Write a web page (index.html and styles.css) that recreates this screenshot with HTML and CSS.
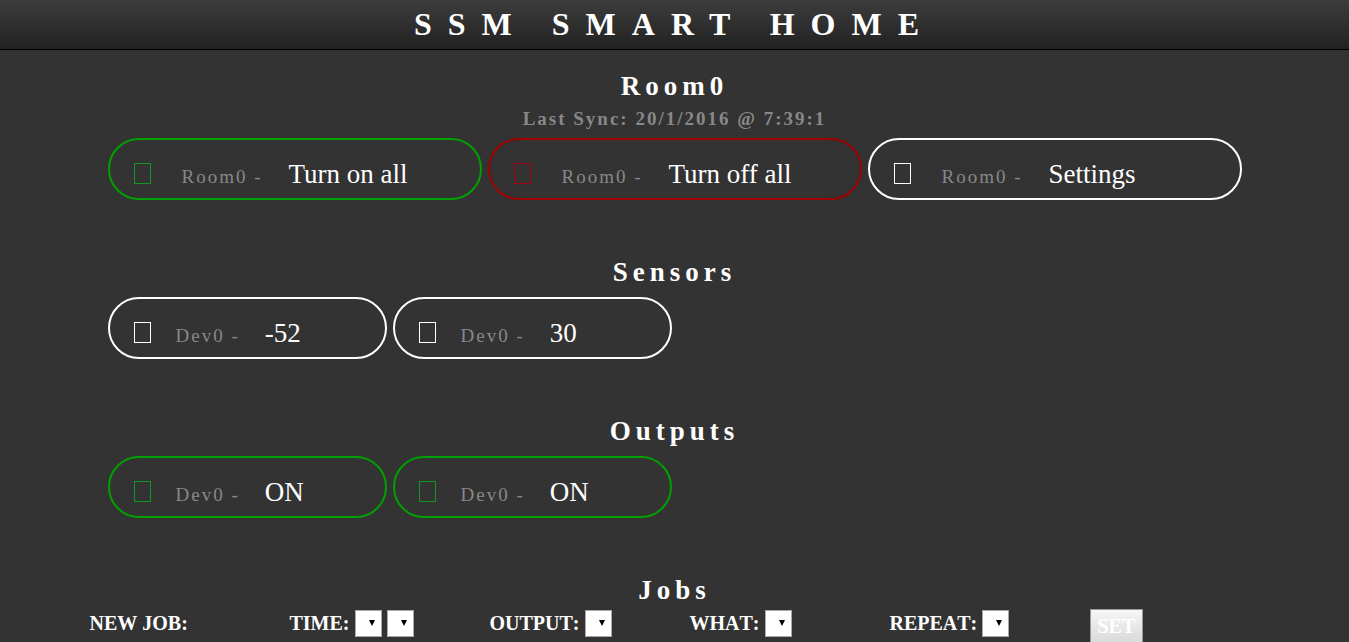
FILE: index.html
```html
<!DOCTYPE html>
<html lang="en">
<head>
<meta charset="utf-8">
<title>SSM Smart Home</title>
<link rel="stylesheet" href="styles.css">
</head>
<body>
<header class="topbar"><h1 class="title">SSM SMART HOME</h1></header>
<main>
  <section class="section">
    <h2 class="heading">Room0</h2>
    <h3 class="sync">Last Sync: 20/1/2016 @ 7:39:1</h3>
    <div class="grid actions">
      <button type="button" class="pill green"><span class="icon"></span><span class="label">Room0 -</span><span class="value">Turn on all</span></button>
      <button type="button" class="pill red"><span class="icon"></span><span class="label">Room0 -</span><span class="value">Turn off all</span></button>
      <button type="button" class="pill"><span class="icon"></span><span class="label">Room0 -</span><span class="value">Settings</span></button>
    </div>
  </section>
  <section class="section">
    <h2 class="heading">Sensors</h2>
    <div class="grid devices">
      <div class="pill"><span class="icon"></span><span class="label">Dev0 -</span><span class="value">-52</span></div>
      <div class="pill"><span class="icon"></span><span class="label">Dev0 -</span><span class="value">30</span></div>
    </div>
  </section>
  <section class="section">
    <h2 class="heading">Outputs</h2>
    <div class="grid devices">
      <button type="button" class="pill green"><span class="icon"></span><span class="label">Dev0 -</span><span class="value">ON</span></button>
      <button type="button" class="pill green"><span class="icon"></span><span class="label">Dev0 -</span><span class="value">ON</span></button>
    </div>
  </section>
  <section class="section">
    <h2 class="heading">Jobs</h2>
    <form class="jobs">
      <div class="field">NEW JOB:</div>
      <div class="field">
        <label for="hour">TIME:</label>
        <span class="drop"><select id="hour"></select></span>
        <span class="drop"><select id="minute" aria-label="Minute"></select></span>
      </div>
      <div class="field"><label for="output">OUTPUT:</label><span class="drop"><select id="output"></select></span></div>
      <div class="field"><label for="what">WHAT:</label><span class="drop"><select id="what"></select></span></div>
      <div class="field"><label for="repeat">REPEAT:</label><span class="drop"><select id="repeat"></select></span></div>
      <div class="field"><button type="button" class="set">SET</button></div>
    </form>
  </section>
</main>
</body>
</html>
```
FILE: styles.css
```css
* { box-sizing: border-box; }

html { scrollbar-width: none; }

body {
  margin: 0;
  background: #333;
  color: #fff;
  font-family: "Liberation Serif", "Times New Roman", serif;
}

h1, h2, h3 { margin: 0; }

.topbar {
  padding: 6px 0 7px;
  background: linear-gradient(#3c3c3c, #222);
  border-bottom: 1px solid #000;
  text-align: center;
}

.title {
  font-size: 32px;
  line-height: 36px;
  letter-spacing: 16px;
}

.section { padding-bottom: 57px; }
.section:first-child { padding-top: 21px; }
.section:last-child { padding-bottom: 0; }

.heading {
  font-size: 27px;
  line-height: 30px;
  letter-spacing: 5px;
  text-align: center;
}

.sync {
  padding-top: 7px;
  font-size: 19px;
  line-height: 22px;
  letter-spacing: 2px;
  text-align: center;
  color: #888;
}

.grid {
  display: grid;
  gap: 6px;
  max-width: 1134px;
  margin: 10px auto 0;
}

.actions {
  grid-template-columns: repeat(3, 1fr);
  margin-top: 8px;
}

.devices { grid-template-columns: repeat(4, 1fr); }

.pill {
  display: flex;
  align-items: baseline;
  gap: 25px;
  padding: 19px 24px 9px;
  border: 2px solid #fff;
  border-radius: 31px;
  background: none;
  color: #fff;
  font-family: inherit;
  text-align: left;
}

.actions .pill { gap: 26px; }
.actions .icon { margin-right: 5px; }

.green { border-color: #00a000; }
.red { border-color: #a00000; }

.icon {
  width: 17px;
  height: 21px;
  margin-bottom: -1px;
  border: 1px solid #fff;
  align-self: flex-end;
  margin-bottom: 5px;
}

.green .icon { border-color: #109820; }
.red .icon { border-color: #a00010; }

.label {
  font-size: 19px;
  line-height: 22px;
  letter-spacing: 2px;
  color: #888;
}

.value {
  font-size: 27px;
  line-height: 30px;
}

.jobs {
  display: grid;
  grid-template-columns: repeat(6, 1fr);
  max-width: 1200px;
  margin: 4px auto 0;
  font-kerning: none;
}

.field {
  display: flex;
  align-items: flex-start;
  gap: 5px;
  padding-left: 15px;
  font-size: 20px;
  font-weight: bold;
  line-height: 29px;
}

.drop {
  position: relative;
  padding-top: 1px;
  line-height: 0;
}

.drop::after {
  content: "";
  position: absolute;
  top: 11px;
  right: 7px;
  border: 3px solid transparent;
  border-top: 6px solid #000;
  border-bottom: 0;
  pointer-events: none;
}

.drop select {
  appearance: none;
  width: 27px;
  height: 27px;
  padding: 0;
  border: 1px solid #a9a9a9;
  border-radius: 0;
  background: #fff;
}

.set {
  padding: 4px 7px 6px;
  border: 1px solid #999;
  background: linear-gradient(#f6f6f6, #d8d8d8);
  color: #fff;
  font-family: inherit;
  font-size: 20px;
  font-weight: bold;
  line-height: 24px;
}
```
